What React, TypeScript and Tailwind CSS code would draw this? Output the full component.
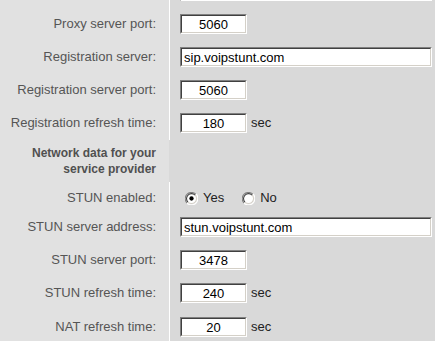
import React from "react";

const font = { fontFamily: '"Liberation Sans", Arial, sans-serif' };

function Field({ value, wide }: { value: string; wide?: boolean }) {
  return (
    <span className="inline-block border-t border-l border-t-[#808080] border-l-[#808080] border-b border-r border-b-white border-r-white">
      <span
        className={`flex items-center h-[18px] bg-white border-t border-l border-t-[#404040] border-l-[#404040] border-b border-r border-b-[#d4d0c8] border-r-[#d4d0c8] text-[13px] text-black leading-none ${
          wide ? "w-[250px] pl-[2px]" : "w-[65px] justify-center"
        }`}
      >
        {value}
      </span>
    </span>
  );
}

function Radio({ checked }: { checked?: boolean }) {
  return (
    <svg width="13" height="13" viewBox="0 0 12 12" className="block">
      <circle cx="6" cy="6" r="5.5" fill="white" />
      <path d="M10.2 2.2 A5.5 5.5 0 0 0 1.8 10.2" fill="none" stroke="#808080" strokeWidth="1" />
      <path d="M9.3 2.9 A4.5 4.5 0 0 0 2.7 9.3" fill="none" stroke="#404040" strokeWidth="1" />
      <path d="M1.8 10.2 A5.5 5.5 0 0 0 10.2 1.8" fill="none" stroke="#ffffff" strokeWidth="1" />
      <path d="M2.7 9.3 A4.5 4.5 0 0 0 9.3 2.7" fill="none" stroke="#d4d0c8" strokeWidth="1" />
      {checked && <circle cx="6" cy="6" r="2" fill="black" />}
    </svg>
  );
}

function Row({
  label,
  children,
  h = "h-[33px]",
  pt = "pt-[7px]",
}: {
  label: string;
  children: React.ReactNode;
  h?: string;
  pt?: string;
}) {
  return (
    <div className={`flex ${h}`}>
      <div className={`w-[169px] shrink-0 bg-[#e1e1e1] text-right pr-[13px] ${pt} text-[13px] leading-[20px] text-[#555555]`}>
        {label}
      </div>
      <div className="w-px shrink-0 bg-white" />
      <div className={`flex-1 bg-[#d9d9d9] pl-[10px] ${pt} flex items-start`}>{children}</div>
    </div>
  );
}

export default function App() {
  return (
    <div className="w-[435px] h-[341px] overflow-hidden bg-[#d9d9d9]" style={font}>
      <div className="mt-[-26px]">
        <Row label="">
          <Field value="" wide />
        </Row>
        <Row label="Proxy server port:">
          <Field value="5060" />
        </Row>
        <Row label="Registration server:">
          <Field value="sip.voipstunt.com" wide />
        </Row>
        <Row label="Registration server port:">
          <Field value="5060" />
        </Row>
        <Row label="Registration refresh time:" h="h-[34px]">
          <Field value="180" />
          <span className="ml-[4px] text-[13px] leading-[20px] text-[#222222]">sec</span>
        </Row>
        <div className="flex h-[42px]">
          <div className="w-[169px] shrink-0 bg-[#e1e1e1] text-right pr-[13px] pt-[5px] text-[12px] leading-[16px] font-bold text-[#505050]">
            Network data for your
            <br />
            service provider
          </div>
          <div className="w-px shrink-0 bg-[#d9d9d9]" />
          <div className="flex-1 bg-[#d9d9d9]" />
        </div>
        <Row label="STUN enabled:" h="h-[28px]" pt="pt-[6px]">
          <div className="flex items-center h-[20px] text-[13px] text-[#222222]">
            <span className="ml-[5px]">
              <Radio checked />
            </span>
            <span className="ml-[5px]">Yes</span>
            <span className="ml-[18px]">
              <Radio />
            </span>
            <span className="ml-[5px]">No</span>
          </div>
        </Row>
        <Row label="STUN server address:">
          <Field value="stun.voipstunt.com" wide />
        </Row>
        <Row label="STUN server port:">
          <Field value="3478" />
        </Row>
        <Row label="STUN refresh time:" h="h-[34px]">
          <Field value="240" />
          <span className="ml-[4px] text-[13px] leading-[20px] text-[#222222]">sec</span>
        </Row>
        <Row label="NAT refresh time:">
          <Field value="20" />
          <span className="ml-[4px] text-[13px] leading-[20px] text-[#222222]">sec</span>
        </Row>
      </div>
    </div>
  );
}
